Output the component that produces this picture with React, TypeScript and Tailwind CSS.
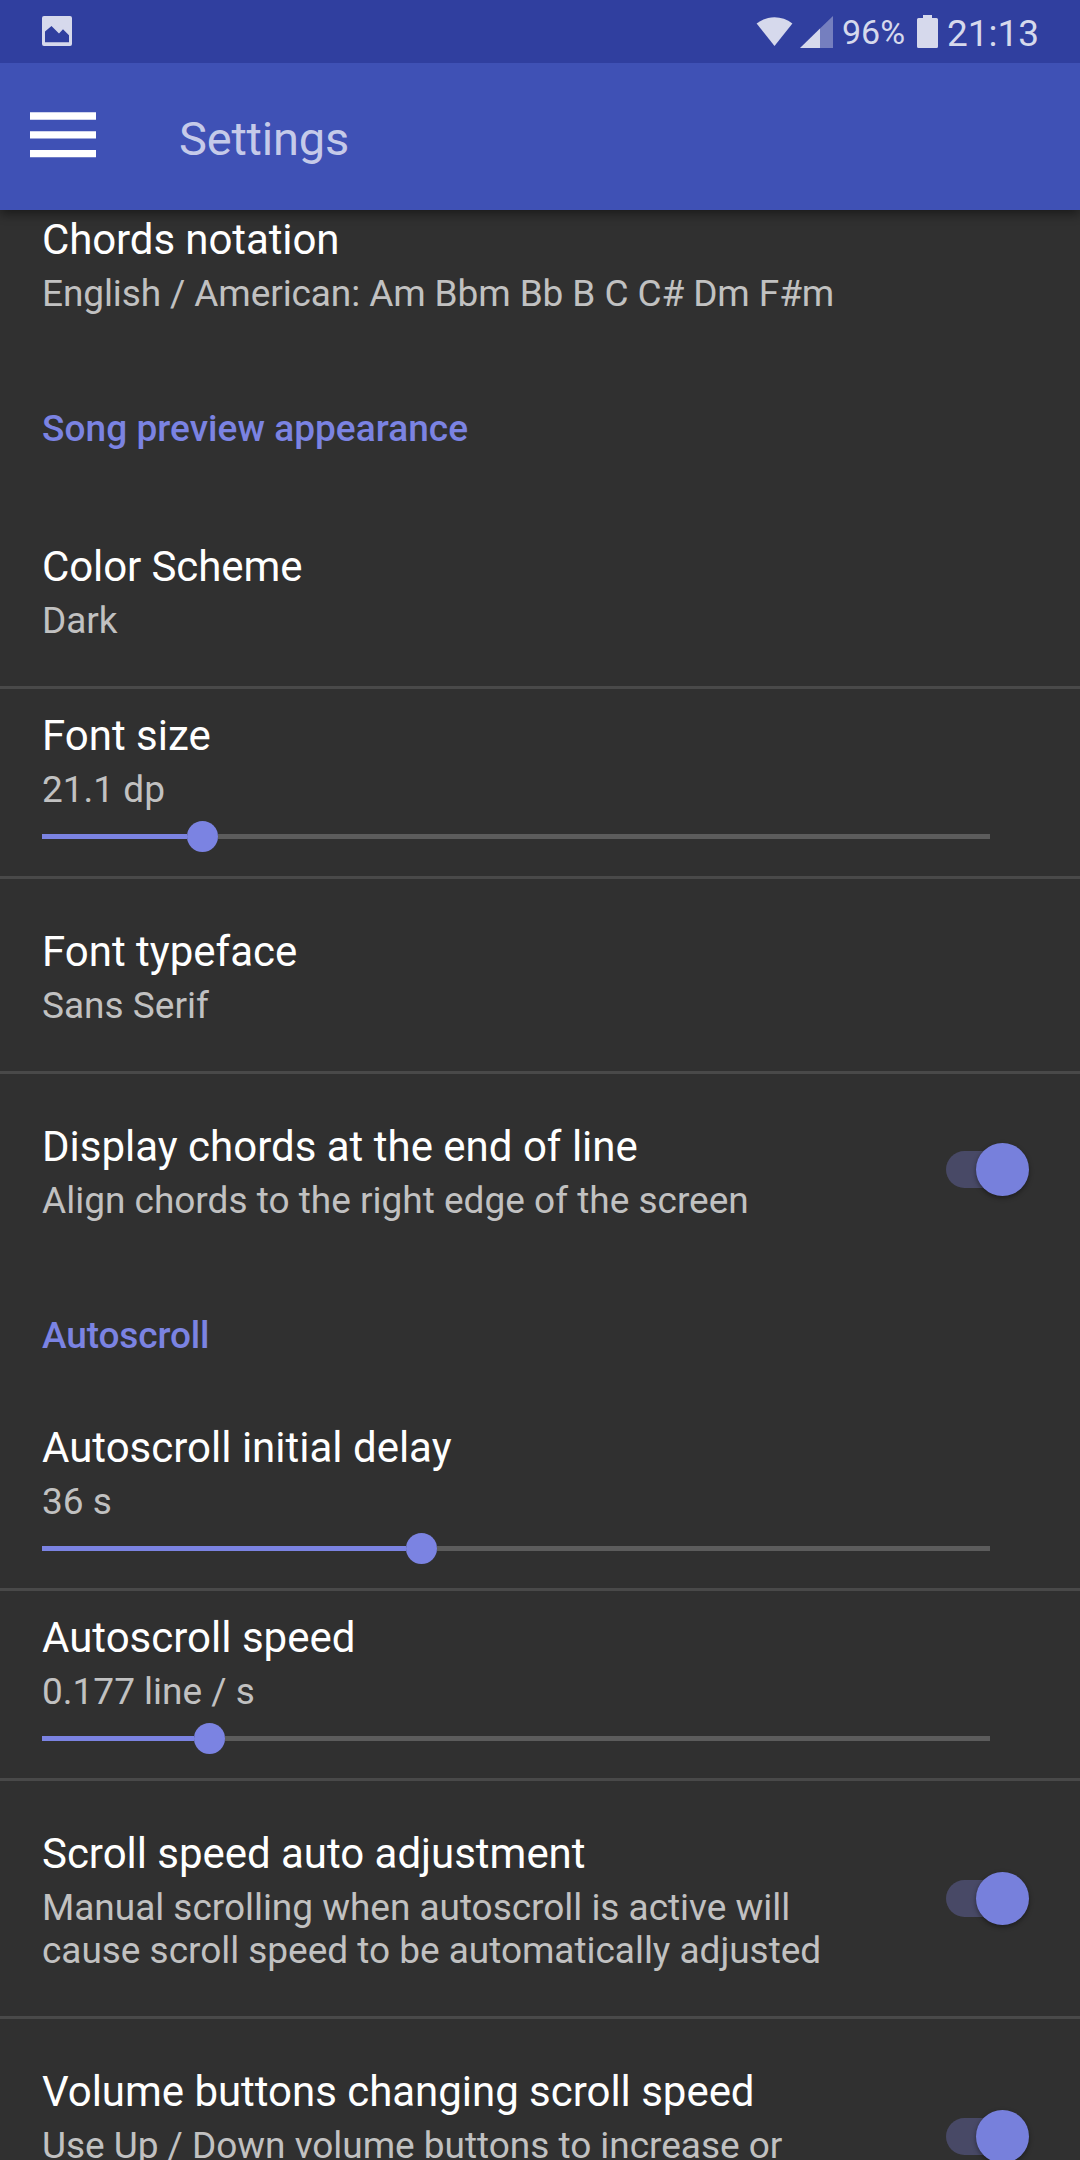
import React from "react";

function StatusBar() {
  return (
    <div className="flex h-[63px] items-start bg-[#303f9f] pl-[42px] text-[#d6d9ec]">
      <svg className="mt-4 h-[30px] w-[30px]" viewBox="0 0 30 30">
        <path
          fill="currentColor"
          fillRule="evenodd"
          d="M2 0H28a2 2 0 0 1 2 2V28a2 2 0 0 1-2 2H2a2 2 0 0 1-2-2V2a2 2 0 0 1 2-2ZM3 15.500V26.300H27V19.200L21 13.300L17 17.400L9.500 10Z"
        />
      </svg>
      <svg className="mt-[17px] ml-[684px] h-[29px] w-[37px]" viewBox="0 0 37 29">
        <path fill="currentColor" d="M18.500 29L.6 6.500C11 -2 26 -2 36.400 6.500Z" />
      </svg>
      <svg className="mt-4 ml-[7px] h-8 w-[33px]" viewBox="0 0 33 32">
        <path fill="currentColor" fillOpacity=".42" d="M20 12.500L33 0V32H20Z" />
        <path fill="currentColor" d="M0 32L20 12.500V32Z" />
      </svg>
      <span className="mt-[12px] ml-[9px] w-[75px] text-[34px] leading-[40px]">96%</span>
      <svg className="mt-[15px] h-[33px] w-[21px]" viewBox="0 0 21 33">
        <path
          fill="currentColor"
          d="M6 0H15V3H19.500a1.500 1.500 0 0 1 1.500 1.500V31.500a1.500 1.500 0 0 1-1.500 1.500H1.500A1.500 1.500 0 0 1 0 31.500V4.500A1.500 1.500 0 0 1 1.500 3H6Z"
        />
      </svg>
      <span className="mt-[12px] ml-[9px] text-[37px] leading-[43px]">21:13</span>
    </div>
  );
}

function AppBar() {
  return (
    <div className="flex h-[147px] items-start bg-[#3f51b5] pl-[30px]">
      <svg className="mt-[49px] h-[46px] w-[66px]" viewBox="0 0 66 46">
        <path fill="#fff" d="M0 .3H66V7.700H0ZM0 19.200H66V26.500H0ZM0 38H66V45.300H0Z" />
      </svg>
      <h1 className="mt-[48px] ml-[83px] text-[47px] leading-[55px] tracking-[-0.2px] text-[#c5cae9]">
        Settings
      </h1>
    </div>
  );
}

function Label({ title, lines }: { title: string; lines: string[] }) {
  return (
    <div className="flex flex-col whitespace-nowrap">
      <div className="text-[42px] leading-[49px] text-white">{title}</div>
      <div className="mt-2 text-[37px] leading-[43px] text-[#c1c1c1]">
        {lines.map((line) => (
          <div key={line}>{line}</div>
        ))}
      </div>
    </div>
  );
}

function Heading({ children }: { children: React.ReactNode }) {
  return (
    <h2 className="px-[42px] pt-12 pb-11 text-[37px] leading-[43px] font-medium text-[#7b83e2]">
      {children}
    </h2>
  );
}

function Divider() {
  return <div className="h-[3px] shrink-0 bg-[#494949]" />;
}

function Row({ title, lines }: { title: string; lines: string[] }) {
  return (
    <div className="px-[42px] pt-12 pb-11">
      <Label title={title} lines={lines} />
    </div>
  );
}

function SliderRow({ title, value, filled }: { title: string; value: string; filled: number }) {
  return (
    <div className="px-[42px] pt-[22px] pb-6">
      <Label title={title} lines={[value]} />
      <div className="mt-[10px] flex h-[31px] w-[948px] items-center">
        <div className="h-[5px] bg-[#7b83e2]" style={{ width: filled }} />
        <div className="size-[31px] shrink-0 rounded-full bg-[#7b83e2]" />
        <div className="h-[5px] flex-1 bg-[#5c5c5c]" />
      </div>
    </div>
  );
}

function Switch() {
  return (
    <div className="relative flex h-[53px] w-[83px] items-center">
      <div className="h-[37px] w-[74px] rounded-full bg-[#484966]" />
      <div className="absolute top-0 right-0 size-[53px] rounded-full bg-[#7780dc] shadow-[0_2px_5px_rgba(0,0,0,0.4)]" />
    </div>
  );
}

function SwitchRow({ title, lines }: { title: string; lines: string[] }) {
  return (
    <div className="flex items-center justify-between pt-12 pr-[51px] pb-11 pl-[42px]">
      <Label title={title} lines={lines} />
      <div className="-mt-[5px]">
        <Switch />
      </div>
    </div>
  );
}

export default function App() {
  return (
    <div className="flex h-[2160px] w-[1080px] flex-col overflow-hidden bg-[#303030] font-['Roboto',sans-serif]">
      <header className="z-10 shrink-0 shadow-[0_4px_10px_rgba(0,0,0,0.45)]">
        <StatusBar />
        <AppBar />
      </header>
      <main className="flex flex-col">
        <div className="px-[42px] pt-[5px] pb-11 tracking-[-0.1px]">
          <Label title="Chords notation" lines={["English / American: Am Bbm Bb B C C# Dm F#m"]} />
        </div>
        <Heading>
          <span className="tracking-[0.05px]">Song preview appearance</span>
        </Heading>
        <div className="tracking-[-0.1px]">
          <Row title="Color Scheme" lines={["Dark"]} />
        </div>
        <Divider />
        <SliderRow title="Font size" value="21.1 dp" filled={145} />
        <Divider />
        <Row title="Font typeface" lines={["Sans Serif"]} />
        <Divider />
        <SwitchRow
          title="Display chords at the end of line"
          lines={["Align chords to the right edge of the screen"]}
        />
        <Heading>
          <span className="tracking-[-0.12px]">Autoscroll</span>
        </Heading>
        <SliderRow title="Autoscroll initial delay" value="36 s" filled={364} />
        <Divider />
        <SliderRow title="Autoscroll speed" value="0.177 line / s" filled={152} />
        <Divider />
        <div className="tracking-[-0.03px]">
          <SwitchRow
            title="Scroll speed auto adjustment"
            lines={[
              "Manual scrolling when autoscroll is active will",
              "cause scroll speed to be automatically adjusted",
            ]}
          />
        </div>
        <Divider />
        <div className="flex h-[235px] justify-between pt-12 pr-[51px] pl-[42px] tracking-[-0.03px]">
          <Label
            title="Volume buttons changing scroll speed"
            lines={["Use Up / Down volume buttons to increase or"]}
          />
          <div className="mt-[43px]">
            <Switch />
          </div>
        </div>
      </main>
    </div>
  );
}
